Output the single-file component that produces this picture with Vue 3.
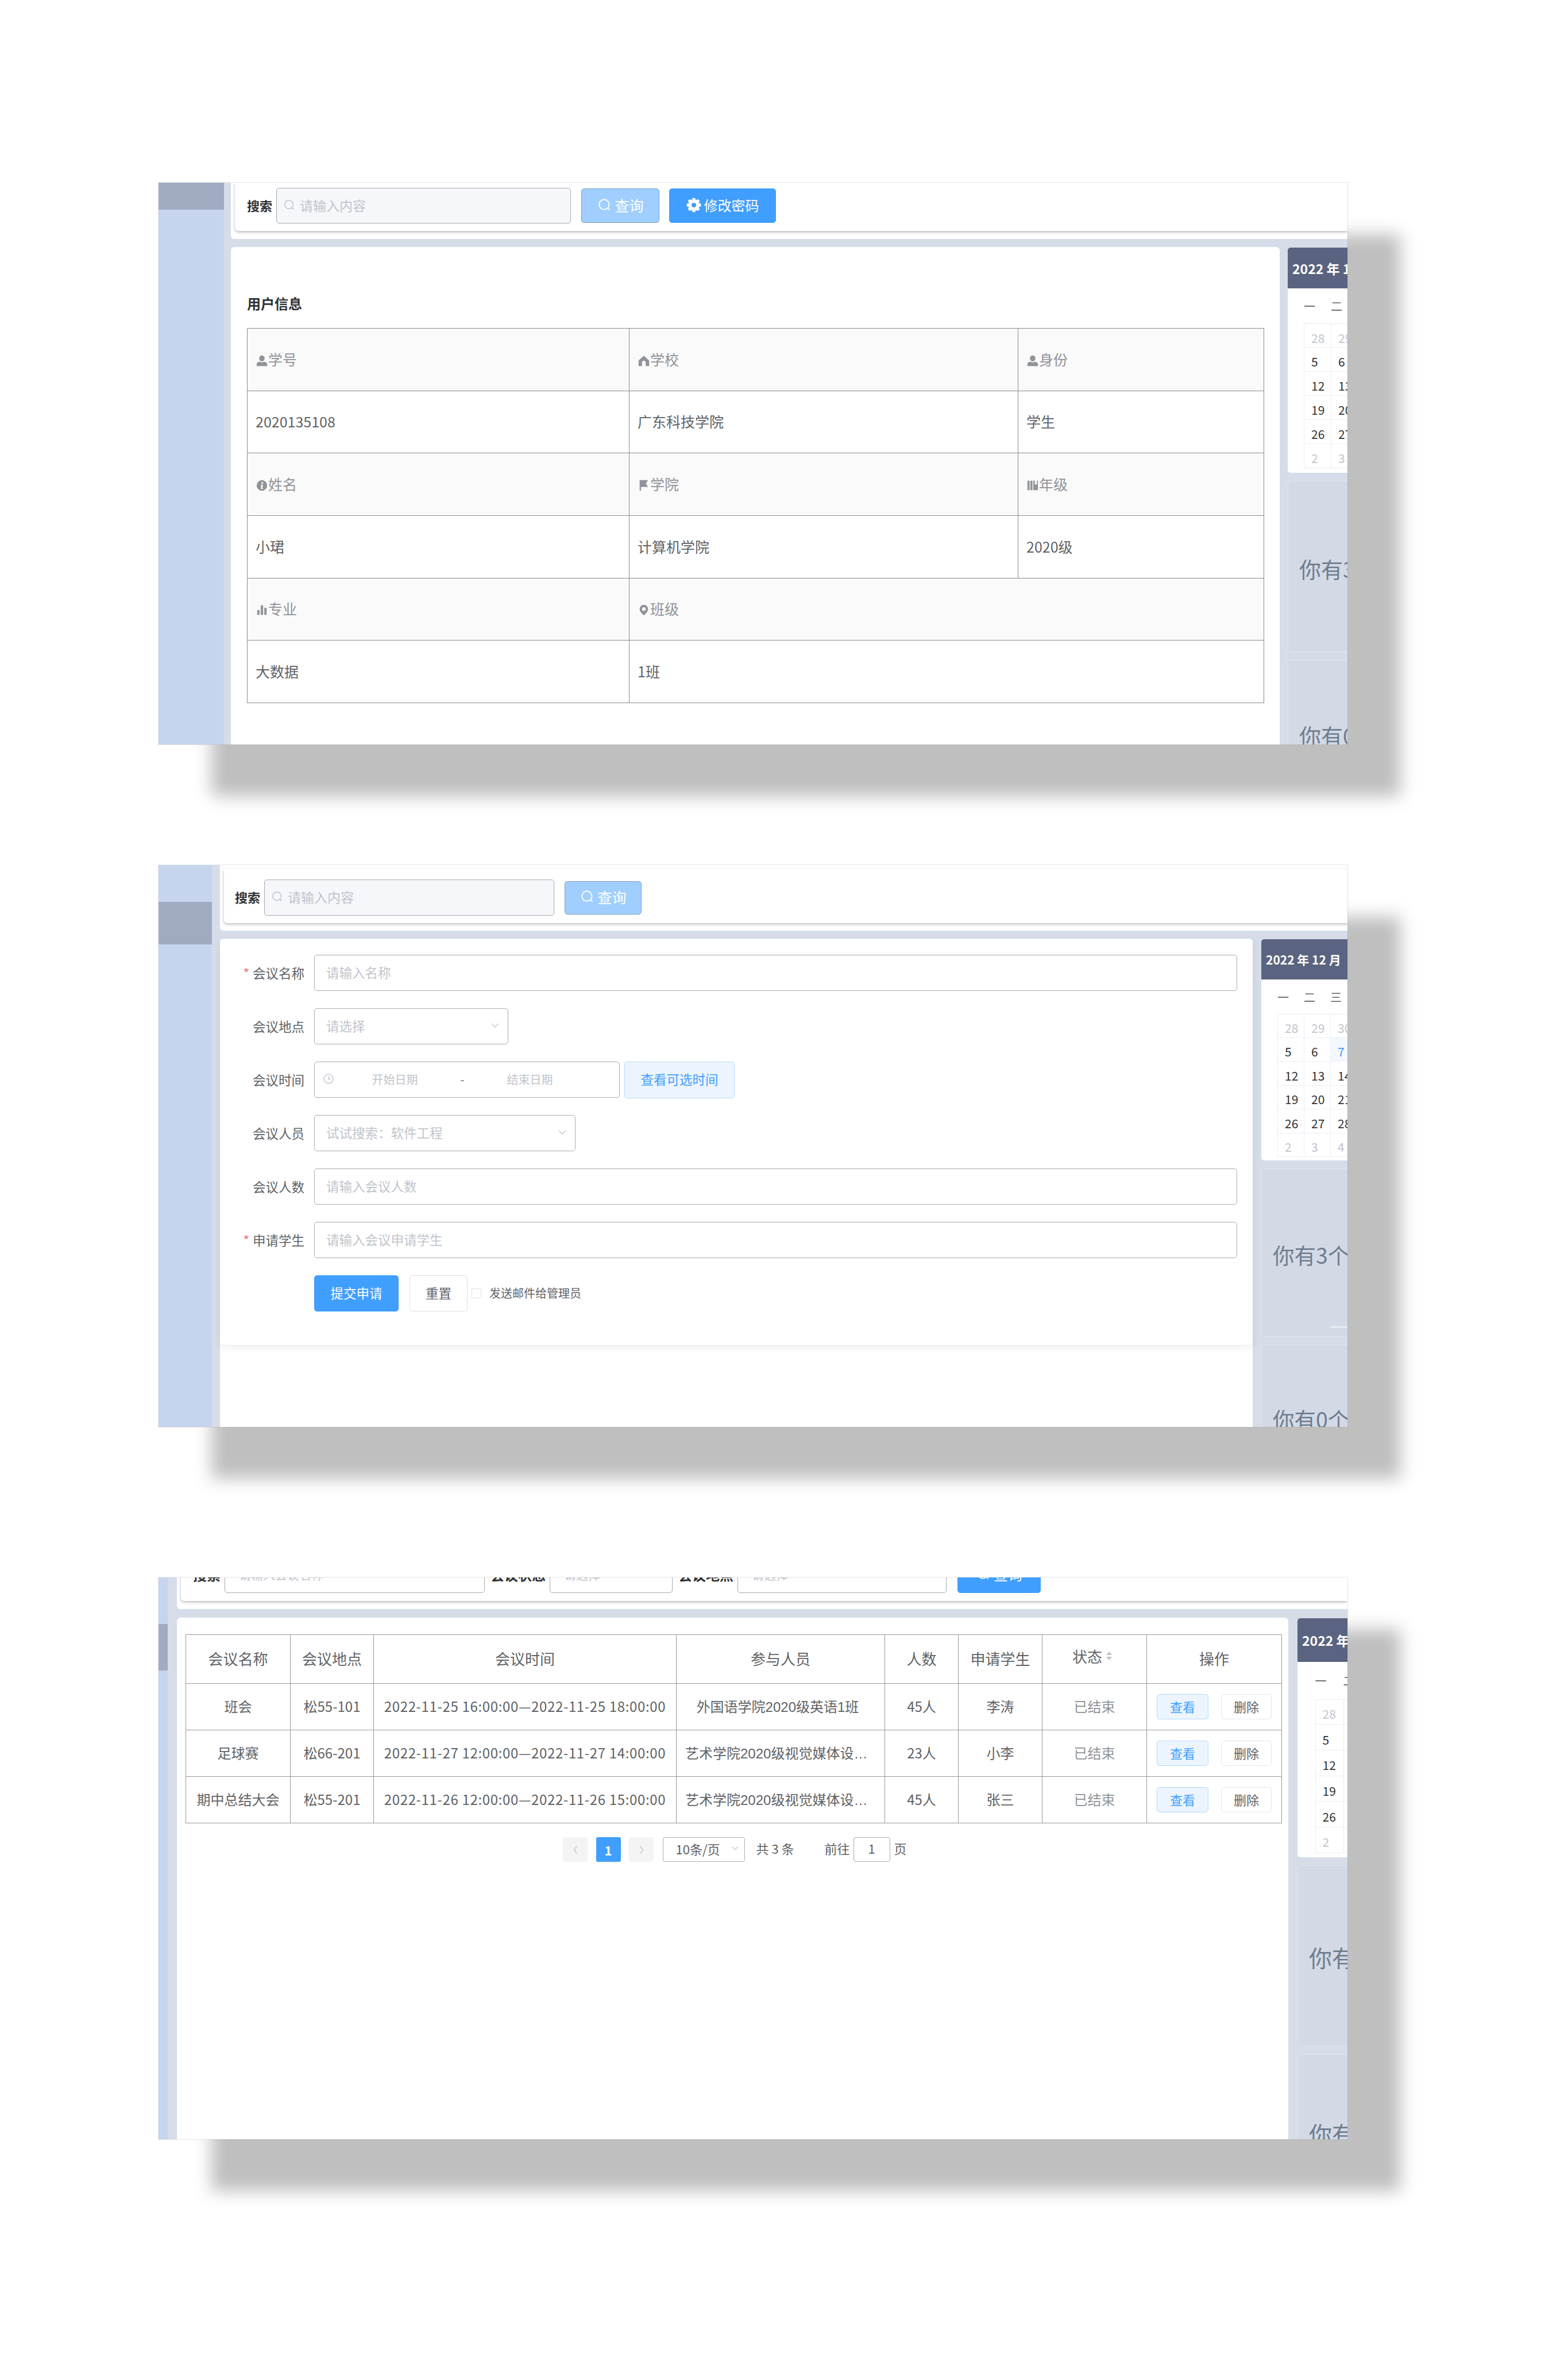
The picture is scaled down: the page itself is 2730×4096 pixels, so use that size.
<script setup>
const gearPath = (() => {
  let d = ''
  const teeth = 8
  for (let i = 0; i < teeth; i++) {
    const a = (i / teeth) * Math.PI * 2
    const step = Math.PI / teeth
    const pts = [
      [8.6, a - step * 0.95],
      [11.6, a - step * 0.45],
      [11.6, a + step * 0.45],
      [8.6, a + step * 0.95]
    ]
    for (const [r, t] of pts) {
      d += `${d ? 'L' : 'M'}${(12 + r * Math.cos(t)).toFixed(2)} ${(12 + r * Math.sin(t)).toFixed(2)}`
    }
  }
  return d + 'ZM12 8.2a3.8 3.8 0 1 0 0 7.6a3.8 3.8 0 1 0 0-7.6Z'
})()

const icons = {
  gear: gearPath,
  user: 'M12 2a5.2 5.2 0 0 1 5.2 5.4c0 3-2.3 5.8-5.2 5.8S6.800 10.400 6.800 7.400A5.200 5.200 0 0 1 12 2ZM8 13.600c1.100 1 2.500 1.500 4 1.500s2.900-.5 4-1.500c3.400.7 6 2.300 6 4.400V22H2v-4c0-2.100 2.600-3.700 6-4.400Z',
  home: 'M12 2.500 22 11.500V22H15.500V15.500a3.500 3.500 0 0 0-7 0V22H2V11.500Z',
  info: 'M12 2a10 10 0 1 1 0 20a10 10 0 0 1 0-20ZM12.800 5.500a1.800 1.800 0 1 0 0 3.600a1.800 1.800 0 0 0 0-3.600ZM9.500 10.500v1.400h1.300l-1 6.600h4.300v-1.400h-1.200l1.100-6.600Z',
  flag: 'M4 2H20L16 8.500L20 15H6.500V22H4Z',
  books: 'M2 3H6V21H2ZM7.500 3H11.500V21H7.500ZM13 3H22V21H13ZM16 3V11L18 9.500L20 11V3Z',
  bars: 'M3 12H7.500V21H3ZM9.700 3H14.300V21H9.700ZM16.500 8H21V21H16.500Z',
  pin: 'M12 2a8 8 0 0 1 8 8c0 4.700-4.600 9-8 12c-3.400-3-8-7.300-8-12a8 8 0 0 1 8-8ZM12 6.500a3.500 3.500 0 1 0 0 7a3.500 3.500 0 0 0 0-7Z'
}

const shots = [
  { id: 'info', title: '用户信息', count: 3 },
  { id: 'form', count: 3 },
  { id: 'list', count: 3 }
]

const infoRows = [
  { head: true, cells: [
    { icon: 'user', text: '学号' }, { icon: 'home', text: '学校' }, { icon: 'user', text: '身份' }
  ] },
  { cells: [{ text: '2020135108' }, { text: '广东科技学院' }, { text: '学生' }] },
  { head: true, cells: [
    { icon: 'info', text: '姓名' }, { icon: 'flag', text: '学院' }, { icon: 'books', text: '年级' }
  ] },
  { cells: [{ text: '小珺' }, { text: '计算机学院' }, { text: '2020级' }] },
  { head: true, cells: [{ icon: 'bars', text: '专业' }, { icon: 'pin', text: '班级', span: 2 }] },
  { cells: [{ text: '大数据' }, { text: '1班', span: 2 }] }
]

const formRows = [
  { label: '会议名称', required: true, holder: '请输入名称' },
  { label: '会议地点', holder: '请选择', select: 'short' },
  { label: '会议时间', date: true },
  { label: '会议人员', holder: '试试搜索：软件工程', select: 'long' },
  { label: '会议人数', holder: '请输入会议人数' },
  { label: '申请学生', required: true, holder: '请输入会议申请学生' }
]

const columns = ['会议名称', '会议地点', '会议时间', '参与人员', '人数', '申请学生', '状态', '操作']
const colWidths = [182, 145, 527, 363, 128, 146, 182, 235]
const meetings = [
  { name: '班会', place: '松55-101', time: '2022-11-25 16:00:00—2022-11-25 18:00:00', people: '外国语学院2020级英语1班', num: '45人', student: '李涛' },
  { name: '足球赛', place: '松66-201', time: '2022-11-27 12:00:00—2022-11-27 14:00:00', people: '艺术学院2020级视觉媒体设计1班', num: '23人', student: '小李' },
  { name: '期中总结大会', place: '松55-201', time: '2022-11-26 12:00:00—2022-11-26 15:00:00', people: '艺术学院2020级视觉媒体设计1班', num: '45人', student: '张三' }
]

const weekdays = ['一', '二', '三', '四', '五', '六', '日']
const weeks = [
  [[28, 'off'], [29, 'off'], [30, 'off'], [1], [2], [3], [4]],
  [[5], [6], [7, 'today'], [8], [9], [10], [11]],
  [[12], [13], [14], [15], [16], [17], [18]],
  [[19], [20], [21], [22], [23], [24], [25]],
  [[26], [27], [28], [29], [30], [31], [1, 'off']],
  [[2, 'off'], [3, 'off'], [4, 'off'], [5, 'off'], [6, 'off'], [7, 'off'], [8, 'off']]
]
</script>

<template>
  <div class="page">
    <section v-for="shot in shots" :key="shot.id" :class="['shot', 'shot-' + shot.id]">
      <aside class="side"><div class="side-active"></div></aside>

      <div class="right">
        <header class="head">
          <div class="head-card">
            <template v-if="shot.id !== 'list'">
              <span class="search-label">搜索</span>
              <div class="search-input">
                <svg class="ico line" viewBox="0 0 24 24"><circle cx="11" cy="11" r="8" /><path d="M17 17l3 3" /></svg>
                <span>请输入内容</span>
              </div>
              <button class="btn btn-muted">
                <svg class="ico line" viewBox="0 0 24 24"><circle cx="11" cy="11" r="8" /><path d="M17 17l3 3" /></svg>
                查询
              </button>
              <button v-if="shot.id === 'info'" class="btn btn-primary btn-pass">
                <svg class="ico" viewBox="0 0 24 24"><path :d="icons.gear" fill-rule="evenodd" /></svg>
                修改密码
              </button>
            </template>
            <template v-else>
              <span class="search-label">搜索</span>
              <div class="search-input filter-name"><span>请输入会议名称</span></div>
              <span class="search-label filter-label">会议状态</span>
              <div class="search-input filter-state"><span>请选择</span></div>
              <span class="search-label filter-label">会议地点</span>
              <div class="search-input filter-place"><span>请选择</span></div>
              <button class="btn btn-primary btn-find">
                <svg class="ico line" viewBox="0 0 24 24"><circle cx="11" cy="11" r="8" /><path d="M17 17l3 3" /></svg>
                查询
              </button>
            </template>
          </div>
        </header>

        <div class="body">
          <main class="main">
            <div v-if="shot.id === 'info'" class="info">
              <h3 class="info-title">{{ shot.title }}</h3>
              <table class="info-table">
                <colgroup><col style="width: 665px" /><col style="width: 677px" /><col style="width: 428px" /></colgroup>
                <tr v-for="(row, r) in infoRows" :key="r" :class="{ 'is-head': row.head }">
                  <td v-for="cell in row.cells" :key="cell.text" :colspan="cell.span || 1">
                    <svg v-if="cell.icon" class="ico cell-ico" viewBox="0 0 24 24"><path :d="icons[cell.icon]" fill-rule="evenodd" /></svg>{{ cell.text }}
                  </td>
                </tr>
              </table>
            </div>

            <div v-else-if="shot.id === 'form'" class="form-card">
              <div v-for="row in formRows" :key="row.label" class="form-row">
                <label class="form-label"><i v-if="row.required">*</i>{{ row.label }}</label>
                <div v-if="row.date" class="date-wrap">
                  <div class="field date-field">
                    <svg class="ico line clock" viewBox="0 0 24 24"><circle cx="12" cy="12" r="9.500" /><path d="M12 6.500V12.500H16" /></svg>
                    <span class="date-part">开始日期</span>
                    <span class="date-dash">-</span>
                    <span class="date-part">结束日期</span>
                  </div>
                  <button class="btn btn-plain">查看可选时间</button>
                </div>
                <div v-else :class="['field', row.select && 'select-' + row.select]">
                  <span>{{ row.holder }}</span>
                  <svg v-if="row.select" class="ico line chev" viewBox="0 0 24 24"><path d="M4 8l8 8l8-8" /></svg>
                </div>
              </div>
              <div class="form-row form-actions">
                <button class="btn btn-primary btn-submit">提交申请</button>
                <button class="btn btn-reset">重置</button>
                <span class="check"></span>
                <span class="check-text">发送邮件给管理员</span>
              </div>
            </div>

            <div v-else class="list">
              <table class="list-table">
                <colgroup><col v-for="(w, i) in colWidths" :key="i" :style="{ width: w + 'px' }" /></colgroup>
                <thead>
                  <tr>
                    <th v-for="col in columns" :key="col">
                      <span v-if="col === '状态'" class="sortable">
                        {{ col }}<span class="carets"><i class="up"></i><i class="down"></i></span>
                      </span>
                      <template v-else>{{ col }}</template>
                    </th>
                  </tr>
                </thead>
                <tbody>
                  <tr v-for="m in meetings" :key="m.name">
                    <td>{{ m.name }}</td>
                    <td>{{ m.place }}</td>
                    <td class="time">{{ m.time }}</td>
                    <td class="clip">{{ m.people }}</td>
                    <td>{{ m.num }}</td>
                    <td>{{ m.student }}</td>
                    <td class="ended">已结束</td>
                    <td class="ops">
                      <div class="row-actions">
                        <button class="btn btn-plain btn-small">查看</button>
                        <button class="btn btn-small btn-del">删除</button>
                      </div>
                    </td>
                  </tr>
                </tbody>
              </table>
              <div class="pager">
                <span class="page-btn"><svg class="ico line pg" viewBox="0 0 24 24"><path d="M15 4l-6 8l6 8" /></svg></span>
                <span class="page-btn current">1</span>
                <span class="page-btn"><svg class="ico line pg" viewBox="0 0 24 24"><path d="M9 4l6 8l-6 8" /></svg></span>
                <span class="page-size">10条/页<svg class="ico line chev" viewBox="0 0 24 24"><path d="M4 8l8 8l8-8" /></svg></span>
                <span class="page-total">共 3 条</span>
                <span class="page-goto">前往</span>
                <span class="page-input">1</span>
                <span class="page-unit">页</span>
              </div>
            </div>
          </main>

          <div class="aside">
            <div class="calendar">
              <div class="cal-head">2022 年 12 月</div>
              <div class="cal-inner">
                <div class="cal-week"><span v-for="w in weekdays" :key="w">{{ w }}</span></div>
                <div v-for="(week, i) in weeks" :key="i" class="cal-row">
                  <span v-for="(d, j) in week" :key="j" :class="['cal-cell', d[1]]">{{ d[0] }}</span>
                </div>
              </div>
            </div>
            <div class="notice">你有3个<i class="notice-line"></i></div>
            <div class="notice notice-second">你有0个</div>
          </div>
        </div>
      </div>
    </section>
  </div>
</template>

<style scoped>
.page {
  padding: 318px 0 200px 276px;
  font-family: "Noto Sans CJK SC", "Liberation Sans", sans-serif;
  color: #606266;
  background: #fff;
}

.shot {
  display: flex;
  width: 2070px;
  height: 978px;
  overflow: hidden;
  background: #d6dde9;
  box-shadow: 0 0 0 1px rgba(150, 150, 150, 0.25), 92px 90px 28px #bfbfbf;
  --side: 114px;
  --gutter: 12px;
  --gap: 14px;
  --cal-head: 71px;
  --cal-head-font: 23px;
  --cal-week: 61px;
  --cal-pad: 28px;
  --cell-w: 47px;
  --cell-h: 42px;
  --cal-bottom: 8px;
  --notice-h: 298px;
  --notice2-h: 260px;
  --notice-left: 19px;
  --notice-font: 38px;
}
.shot-form {
  margin-top: 210px;
  --side: 93px;
  --gutter: 14px;
  --gap: 15px;
  --cal-head: 70px;
  --cal-head-font: 21px;
  --cal-week: 60px;
  --cell-w: 46px;
  --cell-h: 41.500px;
  --cal-bottom: 6px;
  --notice-h: 293px;
  --notice2-h: 256px;
  --notice-font: 37.500px;
}
.shot-list {
  margin-top: 262px;
  --side: 16px;
  --gutter: 16px;
  --gap: 16px;
  --cal-head: 76px;
  --cal-week: 64.500px;
  --cal-pad: 30.500px;
  --cell-w: 49px;
  --cell-h: 44.700px;
  --cal-bottom: 7px;
  --notice-h: 315px;
  --notice2-h: 276px;
  --notice-font: 40px;
}

.side {
  flex: none;
  width: var(--side);
  margin-right: var(--gutter);
  background: #c6d4ee;
}
.side-active {
  height: 47px;
  background: #a0abc2;
}
.shot-form .side-active {
  height: 74px;
  margin-top: 64px;
}
.shot-list .side-active {
  height: 81px;
  margin-top: 81px;
}

.right {
  display: flex;
  flex: 1;
  flex-direction: column;
  min-width: 0;
}

.head {
  flex: none;
  padding: 0 0 14px 7px;
  background: #fff;
  border-bottom-left-radius: 6px;
}
.shot-form .head {
  padding: 7px 0 13px 7px;
}
.head-card {
  display: flex;
  align-items: center;
  box-sizing: border-box;
  height: 84px;
  padding: 0 21px 4px;
  border-radius: 0 0 0 6px;
  background: #fff;
  box-shadow: 0 2px 5px rgba(0, 0, 0, 0.28);
}
.shot-form .head-card {
  height: 94px;
  padding: 5px 19px 0;
}
.shot-list .head-card {
  height: 94px;
  margin-top: -53px;
  padding: 3px 21px 0;
}

.search-label {
  flex: none;
  padding-bottom: 3px;
  font-size: 22px;
  font-weight: 700;
  color: #303133;
}
.shot-list .search-label {
  font-size: 24px;
}
.search-input {
  display: flex;
  align-items: center;
  flex: none;
  box-sizing: border-box;
  width: 513px;
  height: 62px;
  margin-left: 7px;
  padding: 0 0 3px 11px;
  border: 1px solid #a6a9ad;
  border-radius: 5px;
  background: #f5f7fa;
  color: #c0c4cc;
  font-size: 23px;
}
.search-input .ico {
  width: 22px;
  height: 22px;
  margin-right: 7px;
}
.shot-form .search-input {
  width: 505px;
  height: 63px;
}
.shot-list .search-input {
  height: 63px;
  background: #fff;
  padding-left: 24px;
  font-size: 21px;
}
.shot-list .filter-name { width: 453px; }
.shot-list .filter-state { width: 214px; }
.shot-list .filter-place { width: 364px; }
.filter-label { margin-left: 10px; }

.btn {
  display: inline-flex;
  align-items: center;
  justify-content: center;
  flex: none;
  box-sizing: border-box;
  padding: 0 0 3px;
  border: 1px solid transparent;
  border-radius: 5px;
  font-family: inherit;
  font-size: 25px;
}
.btn .ico {
  width: 26px;
  height: 26px;
  margin-right: 5px;
}
.btn-muted {
  width: 136px;
  height: 60px;
  margin-left: 18px;
  border-color: #7f9dbf;
  background: #a0cfff;
  color: #fff;
}
.shot-form .btn-muted {
  width: 134px;
  height: 58px;
}
.btn-primary {
  border-color: #409eff;
  background: #409eff;
  color: #fff;
}
.btn-pass {
  width: 186px;
  height: 60px;
  margin-left: 17px;
  font-size: 24px;
}
.btn-find {
  width: 145px;
  height: 62px;
  margin-left: 19px;
}
.btn-plain {
  border-color: #b3d8ff;
  background: #ecf5ff;
  color: #409eff;
}

.body {
  display: flex;
  flex: 1;
  gap: var(--gap);
  min-height: 0;
  padding-top: 14px;
}
.shot-list .body {
  padding-top: 15px;
}

.main {
  flex: none;
  border-radius: 6px 6px 0 0;
  background: #fff;
}
.shot-info .main { width: 1826px; }
.shot-form .main { width: 1798px; }
.shot-list .main { width: 1935px; }

/* user info table */
.info {
  padding: 81px 28px 0;
}
.info-title {
  margin: 0 0 26px;
  font-size: 24px;
  line-height: 34px;
  font-weight: 700;
  color: #303133;
}
.info-table {
  width: 1770px;
  table-layout: fixed;
  border-collapse: collapse;
  font-size: 25px;
}
.info-table td {
  height: 108.670px;
  padding: 0 14px 2px;
  border: 1px solid #8c8c8c;
  box-sizing: border-box;
  color: #606266;
}
.info-table .is-head td {
  background: #fafafa;
  color: #909399;
}
.cell-ico {
  width: 22px;
  height: 22px;
  vertical-align: -3px;
}

/* meeting form */
.form-card {
  display: flex;
  flex-direction: column;
  gap: 30px;
  padding: 28px 27px 58px 0;
  border-radius: 6px;
  box-shadow: 0 4px 14px rgba(0, 0, 0, 0.08);
}
.form-row {
  display: flex;
  align-items: center;
  height: 63px;
}
.form-label {
  flex: none;
  width: 147px;
  margin-right: 17px;
  text-align: right;
  padding-bottom: 2px;
  font-size: 22.500px;
  color: #606266;
}
.form-label i {
  margin-right: 6px;
  color: #f56c6c;
  font-style: normal;
}
.field {
  display: flex;
  align-items: center;
  justify-content: space-between;
  flex: 1;
  box-sizing: border-box;
  height: 63px;
  padding: 0 13px 4px 20px;
  border: 1px solid #a9acb1;
  border-radius: 5px;
  color: #c0c4cc;
  font-size: 22.500px;
}
.select-short {
  flex: none;
  width: 338px;
}
.select-long {
  flex: none;
  width: 455px;
}
.chev {
  width: 18px;
  height: 18px;
  color: #c0c4cc;
}
.date-wrap {
  display: flex;
  flex: 1;
  gap: 8px;
}
.date-field {
  flex: none;
  justify-content: flex-start;
  width: 532px;
  padding: 0 0 2px 14px;
  font-size: 20px;
}
.clock {
  flex: none;
  width: 20px;
  height: 20px;
}
.date-part {
  width: 211px;
  text-align: center;
}
.date-dash {
  width: 24px;
  color: #606266;
  text-align: center;
}
.date-wrap .btn-plain {
  width: 192px;
  height: 64px;
  font-size: 22.500px;
}
.form-actions {
  padding-left: 164px;
}
.btn-submit {
  width: 147px;
  height: 63px;
  font-size: 22.500px;
}
.btn-reset {
  width: 101px;
  height: 63px;
  margin-left: 19px;
  border-color: #dcdfe6;
  background: #fff;
  color: #606266;
  font-size: 22.500px;
}
.check {
  width: 17px;
  height: 17px;
  margin-left: 7px;
  border: 1px solid #dcdfe6;
  border-radius: 2px;
  box-sizing: border-box;
}
.check-text {
  margin-left: 14px;
  padding-bottom: 2px;
  font-size: 20px;
  color: #606266;
}

/* meeting list */
.list {
  padding: 29px 12.500px 0 15px;
}
.list-table {
  width: 1908px;
  table-layout: fixed;
  border-collapse: collapse;
  font-size: 24px;
  color: #606266;
}
.list-table th,
.list-table td {
  box-sizing: border-box;
  padding: 0 4px 4px;
  border: 1px solid #999;
  text-align: center;
  white-space: nowrap;
  font-weight: 400;
}
.list-table th {
  height: 85px;
  font-size: 26px;
}
.list-table td {
  height: 81px;
}
.list-table .ops {
  padding-bottom: 0;
}
.list-table .time {
  letter-spacing: 0.650px;
}
.list-table .clip {
  padding: 0 25px 4px 15px;
  overflow: hidden;
  text-overflow: ellipsis;
  font-family: "Liberation Sans", "Noto Sans CJK SC", sans-serif;
}
.list-table .ended {
  color: #909399;
}
.sortable {
  position: relative;
  top: -4px;
  left: -4px;
  display: inline-flex;
  align-items: center;
  gap: 7px;
}
.carets {
  display: inline-flex;
  flex-direction: column;
  gap: 3px;
}
.carets i {
  width: 0;
  height: 0;
  border-left: 5px solid transparent;
  border-right: 5px solid transparent;
}
.carets .up { border-bottom: 6px solid #c0c4cc; }
.carets .down { border-top: 6px solid #c0c4cc; }
.row-actions {
  display: flex;
  justify-content: center;
  gap: 22px;
}
.btn-small {
  width: 90px;
  height: 44px;
  font-size: 22px;
}
.btn-del {
  width: 88px;
  border-color: #e4e7ed;
  background: #fff;
  color: #606266;
}
.pager {
  display: flex;
  align-items: center;
  height: 43px;
  margin-top: 24px;
  padding-left: 657px;
  font-size: 22px;
  color: #606266;
}
.page-btn {
  display: flex;
  align-items: center;
  justify-content: center;
  width: 43px;
  height: 43px;
  margin-right: 14.500px;
  border-radius: 3px;
  background: #f4f4f5;
  color: #c0c4cc;
}
.page-btn.current {
  background: #409eff;
  color: #fff;
  font-weight: 700;
}
.pg {
  width: 20px;
  height: 20px;
}
.page-size {
  display: flex;
  align-items: center;
  justify-content: space-between;
  box-sizing: border-box;
  width: 143px;
  height: 43px;
  margin-left: 1px;
  padding: 0 9px 4px 22px;
  border: 1px solid #a9acb1;
  border-radius: 4px;
}
.page-size .chev {
  width: 15px;
  height: 15px;
}
.page-total,
.page-goto,
.page-unit {
  padding-bottom: 6px;
}
.page-total {
  width: 71px;
  margin-left: 20px;
  white-space: nowrap;
}
.page-goto {
  margin-left: 48px;
}
.page-input {
  box-sizing: border-box;
  width: 64px;
  height: 43px;
  margin: 0 7px 0 6px;
  border: 1px solid #a9acb1;
  border-radius: 4px;
  text-align: center;
  line-height: 36px;
}

/* calendar and notices */
.aside {
  display: flex;
  flex: none;
  flex-direction: column;
  gap: 14px;
  width: 420px;
  padding-top: 1px;
}
.calendar {
  flex: none;
  overflow: hidden;
  border-radius: 5px;
  background: #fff;
}
.cal-head {
  display: flex;
  align-items: center;
  height: var(--cal-head);
  padding-left: 8px;
  background: #5a6480;
  color: #fff;
  font-size: var(--cal-head-font);
  font-weight: 700;
}
.cal-inner {
  padding: 0 0 var(--cal-bottom) var(--cal-pad);
}
.cal-week {
  display: flex;
  align-items: center;
  height: var(--cal-week);
  font-size: 20px;
  color: #606266;
}
.cal-week span {
  width: var(--cell-w);
}
.cal-row {
  display: flex;
}
.cal-cell {
  display: flex;
  align-items: center;
  flex: none;
  box-sizing: border-box;
  width: var(--cell-w);
  height: var(--cell-h);
  padding: 7px 0 0 12px;
  border: 1px solid #ebeef5;
  border-width: 0 0 1px 1px;
  font-size: 21px;
  color: #303133;
}
.cal-week + .cal-row .cal-cell {
  border-top-width: 1px;
}
.cal-cell.off {
  color: #c0c4cc;
}
.cal-cell.today {
  background: #f2f8fe;
  color: #409eff;
}
.notice {
  position: relative;
  display: flex;
  align-items: center;
  flex: none;
  box-sizing: border-box;
  height: var(--notice-h);
  padding: 6px 0 0 var(--notice-left);
  border: 1px solid #e2e7f0;
  border-radius: 6px;
  background: #d3dae6;
  color: #6f7d8e;
  font-size: var(--notice-font);
}
.notice-second {
  height: var(--notice2-h);
  padding-top: 0;
}
.notice-line {
  position: absolute;
  left: 119px;
  bottom: 15px;
  width: 200px;
  height: 2px;
  background: #f0f3f8;
}

.ico {
  display: inline-block;
  flex: none;
  fill: currentColor;
}
.line {
  fill: none;
  stroke: currentColor;
  stroke-width: 1.700;
}
</style>
